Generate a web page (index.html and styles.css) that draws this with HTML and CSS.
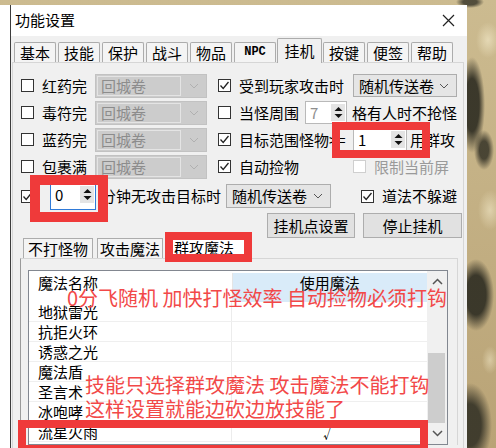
FILE: index.html
```html
<!DOCTYPE html>
<html lang="zh-CN">
<head>
    <meta charset="UTF-8">
    <meta name="viewport" content="width=device-width, initial-scale=1.0">
    <title>功能设置</title>
    <link rel="stylesheet" href="styles.css">
</head>
<body>
    <div class="edge"></div>
    <div class="window">
        <div class="titlebar">
            <span class="title">功能设置</span>
            <svg class="close" width="13" height="13" viewBox="0 0 13 13"><path d="M1 1 L12 12 M12 1 L1 12" stroke="#222" stroke-width="1.2" fill="none"/></svg>
        </div>

        <div class="tabs">
            <div class="tab">基本</div>
            <div class="tab">技能</div>
            <div class="tab">保护</div>
            <div class="tab">战斗</div>
            <div class="tab">物品</div>
            <div class="tab npc">NPC</div>
            <div class="tab active">挂机</div>
            <div class="tab">按键</div>
            <div class="tab">便签</div>
            <div class="tab">帮助</div>
        </div>

        <div class="page">
            <div class="row">
                <div class="lcol">
                    <span class="cb"></span><span class="lbl">红药完</span>
                    <div class="combo disabled"><span class="field">回城卷</span><svg width="10" height="6" viewBox="0 0 10 6"><polyline points="1,1 5,5 9,1" fill="none" stroke="#b0b0b0"/></svg></div>
                </div>
                <span class="cb"><svg width="11" height="11" viewBox="0 0 11 11"><polyline points="1.5,5.5 4.2,8.5 9.5,2" fill="none" stroke="#222" stroke-width="1.3"/></svg></span>
                <span class="rlbl">受到玩家攻击时</span>
                <div class="combo right"><span class="field">随机传送卷</span><svg width="10" height="6" viewBox="0 0 10 6"><polyline points="1,1 5,5 9,1" fill="none" stroke="#555"/></svg></div>
            </div>

            <div class="row">
                <div class="lcol">
                    <span class="cb"></span><span class="lbl">毒符完</span>
                    <div class="combo disabled"><span class="field">回城卷</span><svg width="10" height="6" viewBox="0 0 10 6"><polyline points="1,1 5,5 9,1" fill="none" stroke="#b0b0b0"/></svg></div>
                </div>
                <span class="cb"></span>
                <span class="rlbl short">当怪周围</span>
                <div class="spin s42"><span class="val grey">7</span><span class="arrows"><svg width="9" height="13" viewBox="0 0 9 13"><path d="M4.5 1 L8.5 5 L0.5 5 Z M0.5 8 L8.5 8 L4.5 12 Z" fill="#111"/></svg></span></div>
                <span class="after">格有人时不抢怪</span>
            </div>

            <div class="row">
                <div class="lcol">
                    <span class="cb"></span><span class="lbl">蓝药完</span>
                    <div class="combo disabled"><span class="field">回城卷</span><svg width="10" height="6" viewBox="0 0 10 6"><polyline points="1,1 5,5 9,1" fill="none" stroke="#b0b0b0"/></svg></div>
                </div>
                <span class="cb"><svg width="11" height="11" viewBox="0 0 11 11"><polyline points="1.5,5.5 4.2,8.5 9.5,2" fill="none" stroke="#222" stroke-width="1.3"/></svg></span>
                <span class="rlbl">目标范围怪物&gt;=</span>
                <div class="spin s54"><span class="val">1</span><span class="arrows"><svg width="9" height="13" viewBox="0 0 9 13"><path d="M4.5 1 L8.5 5 L0.5 5 Z M0.5 8 L8.5 8 L4.5 12 Z" fill="#111"/></svg></span></div>
                <span class="after tight">用群攻</span>
            </div>

            <div class="row">
                <div class="lcol">
                    <span class="cb"></span><span class="lbl">包裹满</span>
                    <div class="combo disabled"><span class="field">回城卷</span><svg width="10" height="6" viewBox="0 0 10 6"><polyline points="1,1 5,5 9,1" fill="none" stroke="#b0b0b0"/></svg></div>
                </div>
                <span class="cb"><svg width="11" height="11" viewBox="0 0 11 11"><polyline points="1.5,5.5 4.2,8.5 9.5,2" fill="none" stroke="#222" stroke-width="1.3"/></svg></span>
                <span class="rlbl">自动捡物</span>
                <span class="cb off"></span>
                <span class="grey">限制当前屏</span>
            </div>

            <div class="row row5">
                <span class="cb"><svg width="11" height="11" viewBox="0 0 11 11"><polyline points="1.5,5.5 4.2,8.5 9.5,2" fill="none" stroke="#222" stroke-width="1.3"/></svg></span>
                <div class="spin s46 focus"><span class="val">0</span><span class="arrows"><svg width="9" height="13" viewBox="0 0 9 13"><path d="M4.5 1 L8.5 5 L0.5 5 Z M0.5 8 L8.5 8 L4.5 12 Z" fill="#111"/></svg></span></div>
                <span class="idle">分钟无攻击目标时</span>
                <div class="combo idle-combo"><span class="field">随机传送卷</span><svg width="10" height="6" viewBox="0 0 10 6"><polyline points="1,1 5,5 9,1" fill="none" stroke="#555"/></svg></div>
                <span class="cb dodge"><svg width="11" height="11" viewBox="0 0 11 11"><polyline points="1.5,5.5 4.2,8.5 9.5,2" fill="none" stroke="#222" stroke-width="1.3"/></svg></span>
                <span>道法不躲避</span>
            </div>

            <div class="row buttons">
                <button class="btn b1">挂机点设置</button>
                <button class="btn b2">停止挂机</button>
            </div>

            <div class="inner">
                <div class="itabs">
                    <div class="itab w70">不打怪物</div>
                    <div class="itab w66">攻击魔法</div>
                    <div class="itab active">群攻魔法</div>
                </div>
                <div class="ipanel">
                    <div class="list">
                        <div class="grid">
                            <div class="head">
                                <div class="c1">魔法名称</div>
                                <div class="c2">使用魔法</div>
                            </div>
                            <div class="item"><div class="c1">地狱雷光</div><div class="c2"></div></div>
                            <div class="item"><div class="c1">抗拒火环</div><div class="c2"></div></div>
                            <div class="item"><div class="c1">诱惑之光</div><div class="c2"></div></div>
                            <div class="item"><div class="c1">魔法盾</div><div class="c2"></div></div>
                            <div class="item"><div class="c1">圣言术</div><div class="c2"></div></div>
                            <div class="item"><div class="c1">冰咆哮</div><div class="c2"></div></div>
                            <div class="item"><div class="c1">流星火雨</div><div class="c2 tick">√</div></div>
                        </div>
                        <div class="scroll">
                            <div class="sbtn"><svg width="11" height="7" viewBox="0 0 11 7"><polyline points="1,6 5.5,1.5 10,6" fill="none" stroke="#555" stroke-width="1.5"/></svg></div>
                            <div class="track"><div class="thumb"></div></div>
                            <div class="sbtn"><svg width="11" height="7" viewBox="0 0 11 7"><polyline points="1,1 5.5,5.5 10,1" fill="none" stroke="#555" stroke-width="1.5"/></svg></div>
                        </div>
                    </div>
                </div>
            </div>
        </div>
    </div>

    <!-- red annotations drawn over the dialog -->
    <div class="mark m1"></div>
    <div class="mark m2"></div>
    <div class="mark m3"></div>
    <div class="mark m4"></div>
    <div class="note n1">0分飞随机 加快打怪效率 自动捡物必须打钩</div>
    <div class="note n2">技能只选择群攻魔法 攻击魔法不能打钩</div>
    <div class="note n3">这样设置就能边砍边放技能了</div>
</body>
</html>
```

FILE: styles.css
```css
body {
    margin: 0;
    width: 496px;
    height: 448px;
    overflow: hidden;
    position: relative;
    display: flex;
    font-family: "Noto Sans CJK SC", "Noto Sans", sans-serif;
    font-size: 15px;
    line-height: 18px;
    color: #000000;
    background-color: #c4b084;
    background-image:
        radial-gradient(ellipse 13px 48px at 472px 105px, rgba(52, 50, 38, 0.95) 55%, transparent 100%),
        radial-gradient(ellipse 10px 20px at 484px 150px, rgba(52, 50, 38, 0.85) 45%, transparent 100%),
        radial-gradient(ellipse 18px 36px at 476px 295px, rgba(52, 50, 38, 0.95) 55%, transparent 100%),
        radial-gradient(ellipse 22px 42px at 470px 425px, rgba(52, 50, 38, 0.9) 50%, transparent 100%),
        radial-gradient(ellipse 14px 6px at 470px 2px, rgba(52, 50, 38, 0.8) 50%, transparent 100%),
        radial-gradient(ellipse 12px 18px at 488px 40px, rgba(235, 224, 190, 0.8), transparent),
        radial-gradient(ellipse 12px 20px at 490px 210px, rgba(235, 224, 190, 0.7), transparent),
        radial-gradient(ellipse 8px 14px at 490px 360px, rgba(235, 224, 190, 0.6), transparent),
        linear-gradient(#ccbb90, #b9a376);
}

.edge {
    width: 10px;
    margin-top: 5px;
    background-color: #ffffff;
    flex: none;
}

.window {
    width: 456px;
    margin-top: 5px;
    border-left: 1px solid #3c3c3c;
    background-color: #f0f0f0;
    display: flex;
    flex-direction: column;
    flex: none;
}

.titlebar {
    height: 31px;
    background-color: #ffffff;
    display: flex;
    align-items: center;
    justify-content: space-between;
    padding: 0 12px 0 4px;
}

.title {
    margin-top: -1px;
}

/* main tab strip */
.tabs {
    height: 26px;
    display: flex;
    align-items: flex-end;
    gap: 2px;
    padding-left: 3px;
}

.tab {
    width: 42px;
    height: 20px;
    box-sizing: border-box;
    border: 1px solid #acacac;
    border-bottom: none;
    border-radius: 2px 2px 0 0;
    background-color: #f4f4f4;
    text-align: center;
    line-height: 19px;
}

.tab.npc {
    font-family: "Liberation Mono", monospace;
    font-size: 12px;
    font-weight: bold;
}

.tab.active {
    width: 45px;
    height: 25px;
    margin: 0 -1px -1px -1px;
    line-height: 23px;
    background-color: #f0f0f0;
    position: relative;
    z-index: 1;
}

.page {
    flex: 1;
    margin: 0 3px 0 1px;
    border: 1px solid #d6d6d6;
    border-bottom: none;
    padding: 9px 0 0 8px;
}

.row {
    height: 27px;
    display: flex;
    align-items: center;
}

.lcol {
    width: 197px;
    flex: none;
    display: flex;
    align-items: center;
}

.cb {
    width: 13px;
    height: 13px;
    box-sizing: border-box;
    border: 1px solid #333333;
    background-color: #ffffff;
    margin-right: 8px;
    flex: none;
    display: flex;
    align-items: center;
    justify-content: center;
}

.cb.off {
    border-color: #cfcfcf;
}

.lbl {
    width: 45px;
    margin-right: 8px;
    white-space: nowrap;
}

.rlbl {
    width: 114px;
    flex: none;
    white-space: nowrap;
}

.rlbl.short {
    width: 66px;
}

.after {
    margin-left: 5px;
    white-space: nowrap;
}

.after.tight {
    margin-left: 3px;
}

.grey {
    color: #9a9a9a;
}

/* combo boxes */
.combo {
    height: 24px;
    box-sizing: border-box;
    border: 1px solid #adadad;
    background-color: #e5e5e5;
    display: flex;
    align-items: center;
    justify-content: space-between;
    padding: 0 7px 0 5px;
    flex: none;
}

.combo.right {
    width: 104px;
    height: 23px;
}

.combo.disabled {
    width: 112px;
    background-color: #cccccc;
    border-color: #c2c2c2;
    padding: 1px 7px 1px 1px;
    color: #8c8c8c;
}

.combo.disabled .field {
    width: 84px;
    height: 100%;
    box-sizing: border-box;
    border: 1px solid #e4e4e4;
    padding-left: 3px;
    line-height: 18px;
}

.idle-combo {
    width: 105px;
    margin-left: 5px;
}

/* spin boxes */
.spin {
    height: 23px;
    box-sizing: border-box;
    border: 1px solid #b9b9b9;
    background-color: #ffffff;
    display: flex;
    align-items: center;
    justify-content: space-between;
    padding: 0 1px 0 4px;
    flex: none;
}

.spin.s42 { width: 42px; }
.spin.s54 { width: 54px; }

.spin.s46 {
    width: 46px;
    height: 27px;
    margin-left: 8px;
    border-color: #2f7ad8;
    align-items: flex-start;
    padding-top: 2px;
}

.val.grey {
    color: #8e8e8e;
}

.arrows {
    width: 14px;
    height: 17px;
    background-color: #e4e4e4;
    display: flex;
    align-items: center;
    justify-content: center;
}

.row5 {
    height: 32px;
}

.idle {
    width: 120px;
    margin-left: 5px;
    white-space: nowrap;
}

.cb.dodge {
    margin-left: 30px;
}

.buttons {
    height: 25px;
    margin-top: 1px;
}

.btn {
    height: 25px;
    box-sizing: border-box;
    border: 1px solid #adadad;
    background-color: #e1e1e1;
    font-family: inherit;
    font-size: 15px;
    padding: 0;
    color: #000000;
}

.btn.b1 {
    width: 88px;
    margin-left: 246px;
}

.btn.b2 {
    width: 99px;
    margin-left: 8px;
}

/* inner tab control */
.inner {
    width: 438px;
    margin-left: -1px;
}

.itabs {
    height: 20px;
    display: flex;
    align-items: flex-end;
    gap: 4px;
    padding-left: 3px;
}

.itab {
    height: 20px;
    box-sizing: border-box;
    border: 1px solid #acacac;
    border-bottom: none;
    background-color: #f4f4f4;
    text-align: center;
    line-height: 19px;
}

.itab.w70 { width: 70px; }
.itab.w66 { width: 66px; }

.itab.active {
    width: 80px;
    height: 24px;
    margin-left: -2px;
    margin-bottom: -1px;
    background-color: #ffffff;
    line-height: 24px;
    text-align: left;
    padding-left: 8px;
    position: relative;
    z-index: 1;
}

.ipanel {
    border: 1px solid #d6d6d6;
    border-left-color: #9a9a9a;
    border-bottom: none;
    padding: 11px 0 0 7px;
}

.list {
    width: 420px;
    height: 175px;
    box-sizing: border-box;
    border: 1px solid #828790;
    background-color: #ffffff;
    display: flex;
}

.grid {
    width: 398px;
}

.head {
    height: 31px;
    display: flex;
}

.head .c1 {
    width: 203px;
    padding: 3px 0 0 9px;
    box-sizing: border-box;
}

.head .c2 {
    width: 195px;
    margin-top: 2px;
    background-color: #d9ebf9;
    border-left: 1px solid #e5e5e5;
    text-align: center;
    padding-top: 1px;
}

.item {
    height: 20px;
    box-sizing: border-box;
    border-bottom: 1px solid #efefef;
    display: flex;
}

.item .c1 {
    width: 203px;
    box-sizing: border-box;
    padding-left: 9px;
    line-height: 19px;
    border-right: 1px solid #ececec;
}

.item .c2 {
    flex: 1;
}

.c2.tick {
    text-align: center;
    font-size: 13px;
    line-height: 22px;
}

.scroll {
    width: 20px;
    background-color: #f0f0f0;
    display: flex;
    flex-direction: column;
}

.sbtn {
    height: 20px;
    display: flex;
    align-items: center;
    justify-content: center;
}

.track {
    height: 132px;
}

.thumb {
    width: 17px;
    height: 70px;
    margin: 62px 0 0 1px;
    background-color: #cdcdcd;
}

/* annotations */
.mark {
    position: absolute;
    box-sizing: border-box;
    border: 8px solid #ef3a3a;
    z-index: 5;
}

.m1 { left: 332px; top: 122px; width: 98px; height: 36px; }
.m2 { left: 30px; top: 175px; width: 78px; height: 47px; border-width: 10px; }
.m3 { left: 165px; top: 232px; width: 87px; height: 30px; }
.m4 { left: 18px; top: 420px; width: 410px; height: 33px; }

.note {
    position: absolute;
    z-index: 6;
    color: #f24848;
    font-size: 20px;
    line-height: 24px;
    white-space: nowrap;
}

.n1 { left: 67px; top: 286px; }
.n2 { left: 85px; top: 373px; }
.n3 { left: 85px; top: 397px; }
```
